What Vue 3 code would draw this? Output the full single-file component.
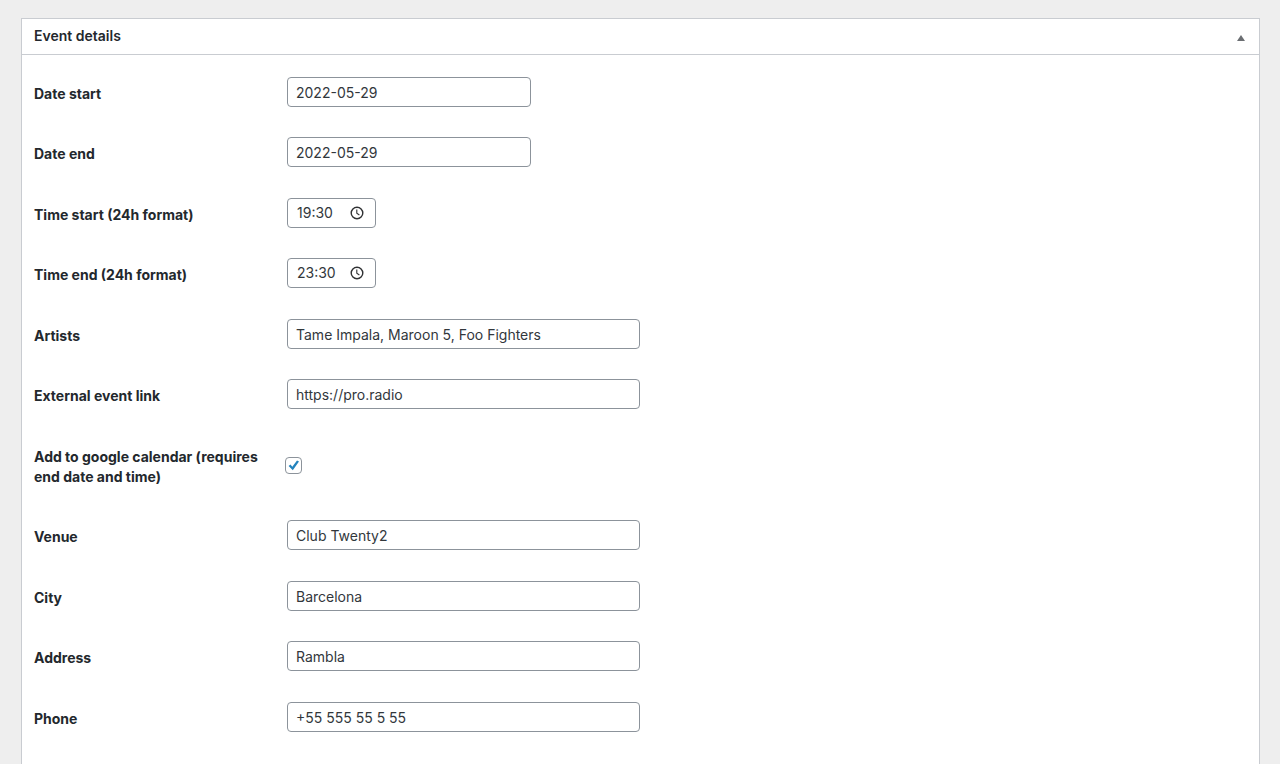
<script setup>
import { reactive, ref } from 'vue'

const open = ref(true)

const fields = reactive([
  { id: 'date-start', label: 'Date start', kind: 'date', value: '2022-05-29' },
  { id: 'date-end', label: 'Date end', kind: 'date', value: '2022-05-29' },
  { id: 'time-start', label: 'Time start (24h format)', kind: 'time', value: '19:30' },
  { id: 'time-end', label: 'Time end (24h format)', kind: 'time', value: '23:30' },
  { id: 'artists', label: 'Artists', kind: 'text', value: 'Tame Impala, Maroon 5, Foo Fighters' },
  { id: 'link', label: 'External event link', kind: 'text', value: 'https://pro.radio' },
  { id: 'calendar', label: 'Add to google calendar (requires end date and time)', kind: 'check', value: true },
  { id: 'venue', label: 'Venue', kind: 'text', value: 'Club Twenty2' },
  { id: 'city', label: 'City', kind: 'text', value: 'Barcelona' },
  { id: 'address', label: 'Address', kind: 'text', value: 'Rambla' },
  { id: 'phone', label: 'Phone', kind: 'text', value: '+55 555 55 5 55' }
])
</script>

<template>
  <main class="page">
    <section class="panel">
      <header class="panel-header">
        <h2 class="panel-title">Event details</h2>
        <button class="toggle" type="button" aria-label="Toggle panel" :aria-expanded="open" @click="open = !open">
          <svg width="8" height="6" viewBox="0 0 8 6" aria-hidden="true">
            <path d="M4 0 L8 6 H0 Z" fill="#6b6e72" />
          </svg>
        </button>
      </header>
      <form v-show="open" class="fields" @submit.prevent>
        <div v-for="field in fields" :key="field.id" class="row">
          <label class="label" :for="field.id">{{ field.label }}</label>
          <span v-if="field.kind === 'check'" class="check">
            <input :id="field.id" v-model="field.value" class="check-input" type="checkbox" />
            <svg v-if="field.value" class="check-mark" width="17" height="17" viewBox="0 0 17 17" aria-hidden="true">
              <path d="M3.6 9.1 L5.5 7.5 L7.3 9.8 L12 3.4 L14 4.6 L7.8 13.2 Z" fill="#2383bd" />
            </svg>
          </span>
          <span v-else-if="field.kind === 'time'" class="box time">
            <input :id="field.id" v-model="field.value" class="time-input" type="text" />
            <button class="clock" type="button" aria-label="Pick a time">
              <svg width="14" height="14" viewBox="0 0 14 14" fill="none" stroke="#2f3133" aria-hidden="true">
                <circle cx="7" cy="7" r="5.8" stroke-width="1.4" />
                <path d="M6.8 3.4 V7.3 L9.4 9" stroke-width="1.1" />
              </svg>
            </button>
          </span>
          <input v-else :id="field.id" v-model="field.value" class="box input" :class="field.kind" type="text" />
        </div>
      </form>
    </section>
  </main>
</template>

<style>
body {
  background: #eeeeee;
}
</style>

<style scoped>
.page {
  box-sizing: border-box;
  display: flex;
  flex-direction: column;
  min-height: 100vh;
  padding: 18px 20px 0 21px;
  background: #eeeeee;
  color: #23282d;
  font-family: Inter, "Liberation Sans", sans-serif;
  font-size: 14px;
  line-height: 20px;
}

.panel {
  flex: 1;
  border: 1px solid #c9ccd1;
  border-bottom: 0;
  background: #fff;
}

.panel-header {
  display: flex;
  align-items: flex-start;
  justify-content: space-between;
  box-sizing: border-box;
  height: 36px;
  padding: 7px 14px 0 12px;
  border-bottom: 1px solid #c9ccd1;
}

.panel-title {
  margin: 0;
  font-size: 14px;
  font-weight: 600;
}

.toggle {
  display: flex;
  padding: 9px 0 0;
  border: 0;
  background: none;
}

.fields {
  padding: 7px 12px 0;
}

.row {
  display: grid;
  grid-template-columns: 232px 1fr;
  column-gap: 21px;
  padding: 15px 0;
}

.row:nth-child(even) {
  padding-bottom: 16px;
}

.label {
  padding: 7px 0 3px;
  font-weight: 700;
}

.box {
  box-sizing: border-box;
  height: 30px;
  border: 1px solid #8c939b;
  border-radius: 4px;
  background: #fff;
}

.input,
.time-input {
  color: #32373c;
  font: inherit;
}

.input {
  width: 100%;
  max-width: 353px;
  padding: 0 8px;
}

.input.date {
  max-width: 244px;
}

.time {
  display: flex;
  align-items: center;
  justify-content: space-between;
  width: 89px;
  padding: 0 11px 0 9px;
}

.time-input {
  width: 46px;
  padding: 0;
  border: 0;
  background: none;
}

.clock {
  display: flex;
  padding: 0;
  border: 0;
  background: none;
}

.check {
  position: relative;
  align-self: center;
  width: 17px;
  height: 17px;
  margin-left: -2px;
}

.check-input {
  box-sizing: border-box;
  display: block;
  width: 17px;
  height: 17px;
  margin: 0;
  border: 1px solid #8c939b;
  border-radius: 4px;
  appearance: none;
  background: #fff;
}

.check-mark {
  position: absolute;
  inset: 0;
  pointer-events: none;
}
</style>
